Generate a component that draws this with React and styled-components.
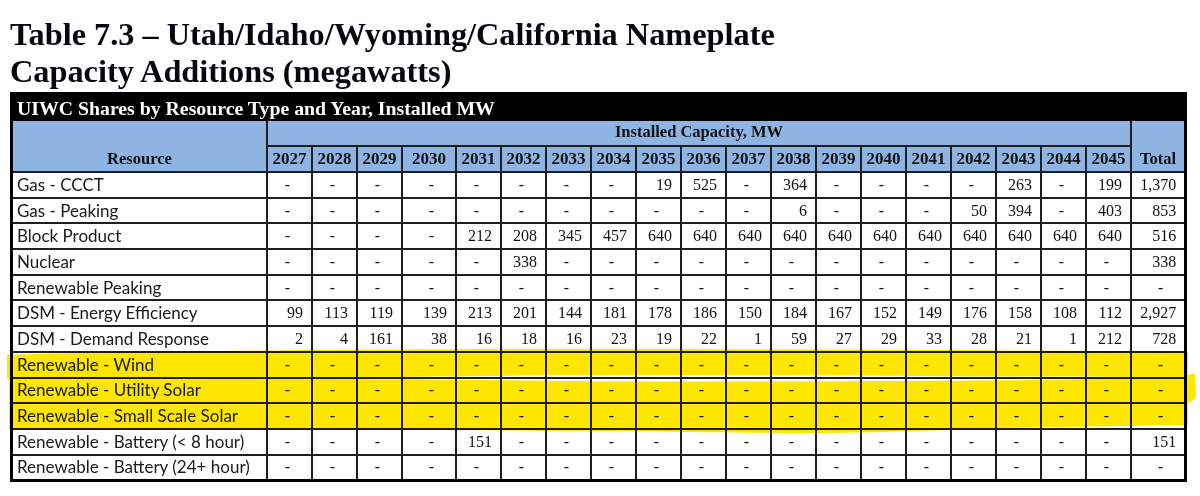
import styled, {createGlobalStyle} from "styled-components"

const GlobalStyle = createGlobalStyle`
  html, body {
    margin: 0;
    padding: 0;
    background: #fff;
  }
`

const YEARS = [
  2027, 2028, 2029, 2030, 2031, 2032, 2033, 2034, 2035, 2036, 2037, 2038,
  2039, 2040, 2041, 2042, 2043, 2044, 2045,
]

const d = "-"

const ROWS = [
  {name: "Gas - CCCT", values: [d, d, d, d, d, d, d, d, 19, 525, d, 364, d, d, d, d, 263, d, 199], total: "1,370"},
  {name: "Gas - Peaking", values: [d, d, d, d, d, d, d, d, d, d, d, 6, d, d, d, 50, 394, d, 403], total: "853"},
  {name: "Block Product", values: [d, d, d, d, 212, 208, 345, 457, 640, 640, 640, 640, 640, 640, 640, 640, 640, 640, 640], total: "516"},
  {name: "Nuclear", values: [d, d, d, d, d, 338, d, d, d, d, d, d, d, d, d, d, d, d, d], total: "338"},
  {name: "Renewable Peaking", values: Array(19).fill(d), total: d},
  {name: "DSM - Energy Efficiency", values: [99, 113, 119, 139, 213, 201, 144, 181, 178, 186, 150, 184, 167, 152, 149, 176, 158, 108, 112], total: "2,927"},
  {name: "DSM - Demand Response", values: [2, 4, 161, 38, 16, 18, 16, 23, 19, 22, 1, 59, 27, 29, 33, 28, 21, 1, 212], total: "728"},
  {name: "Renewable - Wind", values: Array(19).fill(d), total: d},
  {name: "Renewable - Utility Solar", values: Array(19).fill(d), total: d},
  {name: "Renewable - Small Scale Solar", values: Array(19).fill(d), total: d},
  {name: "Renewable - Battery (< 8 hour)", values: [d, d, d, d, 151, d, d, d, d, d, d, d, d, d, d, d, d, d, d], total: "151"},
  {name: "Renewable - Battery (24+ hour)", values: Array(19).fill(d), total: d},
]

// highlighter strokes drawn over the three renewable rows (page coords)
const STROKES = [
  "M7 355 C120 351 400 349 560 349 C760 349 1000 350 1188 352 L1188 377 C1060 377 900 376 760 375 C660 375 600 375 560 375 C420 377 200 379 7 379 Z",
  "M9 378 C200 378 420 379 560 381 C700 382 900 381 1040 380 C1120 379 1170 376 1195 374 L1196 397 C1192 401 1188 404 1188 404 C1000 405 800 405 560 404 C400 404 200 404 9 404 Z",
  "M9 402 C300 402 800 402 1188 402 L1188 425 C1120 426 1060 427 1000 428 C940 430 880 433 820 433 C720 433 620 431 560 431 C440 430 300 428 200 429 C120 429 60 430 9 429 Z",
]

const App = () => {
  return (
    <Page>
      <GlobalStyle />
      <Title>
        Table 7.3 – Utah/Idaho/Wyoming/California Nameplate
        <br />
        Capacity Additions (megawatts)
      </Title>
      <Table>
        <colgroup>
          <col style={{width: 255.5}} />
          {YEARS.map((y) => (
            <col key={y} style={{width: y === 2030 ? 54 : 45}} />
          ))}
          <col style={{width: 54.5}} />
        </colgroup>
        <thead>
          <tr>
            <Banner colSpan={21}>
              UIWC Shares by Resource Type and Year, Installed MW
            </Banner>
          </tr>
          <tr>
            <HeadCell rowSpan={2} $bottom>
              Resource
            </HeadCell>
            <HeadCell colSpan={19} $tall>
              Installed Capacity, MW
            </HeadCell>
            <HeadCell rowSpan={2} $bottom>
              Total
            </HeadCell>
          </tr>
          <tr>
            {YEARS.map((y) => (
              <YearCell key={y}>{y}</YearCell>
            ))}
          </tr>
        </thead>
        <tbody>
          {ROWS.map((row) => (
            <Row key={row.name}>
              <NameCell>{row.name}</NameCell>
              {row.values.map((v, i) => (
                <NumCell key={i} $dash={v === d}>
                  {v}
                </NumCell>
              ))}
              <NumCell $dash={row.total === d}>{row.total}</NumCell>
            </Row>
          ))}
        </tbody>
      </Table>
      <Marker viewBox="0 0 1200 496" aria-hidden="true">
        {STROKES.map((p, i) => (
          <path key={i} d={p} fill="#ffe600" />
        ))}
      </Marker>
    </Page>
  )
}

const Page = styled.div`
  position: relative;
  padding: 16px 0 0 10px;
  width: 1190px;
  height: 480px;
`

const Title = styled.h1`
  margin: 0 0 2px;
  font-family: "Liberation Serif", "Times New Roman", serif;
  font-weight: 700;
  font-size: 32.3px;
  line-height: 37px;
  color: #05060f;
  white-space: nowrap;
`

const Table = styled.table`
  border-collapse: collapse;
  table-layout: fixed;
  width: 1177px;
  border: 3px solid #000;
  font-family: "Liberation Serif", "Times New Roman", serif;
  color: #111;
`

const Banner = styled.th`
  background: #000;
  color: #fff;
  height: 26px;
  padding: 0 0 0 4px;
  text-align: left;
  font-size: 19.8px;
  font-weight: 700;
  line-height: 22px;
  white-space: nowrap;
`

const HeadCell = styled.th`
  background: #8db4e2;
  border: 2px solid #1f1f1f;
  border-top: none;
  height: ${(p) => (p.$tall ? "22px" : "auto")};
  padding: 0 2px 2px;
  vertical-align: ${(p) => (p.$bottom ? "bottom" : "middle")};
  font-size: 16.5px;
  font-weight: 700;
  line-height: 20px;
  white-space: nowrap;
`

const YearCell = styled.th`
  background: #8db4e2;
  border: 2px solid #1f1f1f;
  height: 24px;
  padding: 0;
  font-size: 17px;
  font-weight: 700;
  line-height: 20px;
  text-align: center;
`

const Row = styled.tr`
  height: 25.7px;
  background: #fff;
`

const NameCell = styled.td`
  border: 2px solid #1f1f1f;
  padding: 0 0 0 4px;
  font-family: Lato, "Open Sans", sans-serif;
  font-size: 17px;
  line-height: 20px;
  white-space: nowrap;
  color: #1a1a1a;
`

const NumCell = styled.td`
  border: 2px solid #1f1f1f;
  padding: 0 ${(p) => (p.$dash ? "21px" : "8px")} 0 0;
  text-align: right;
  font-size: 16px;
  line-height: 20px;
  white-space: nowrap;
`

const Marker = styled.svg`
  position: absolute;
  left: 0;
  top: 0;
  width: 1200px;
  height: 496px;
  pointer-events: none;
  mix-blend-mode: multiply;
`

export default App
